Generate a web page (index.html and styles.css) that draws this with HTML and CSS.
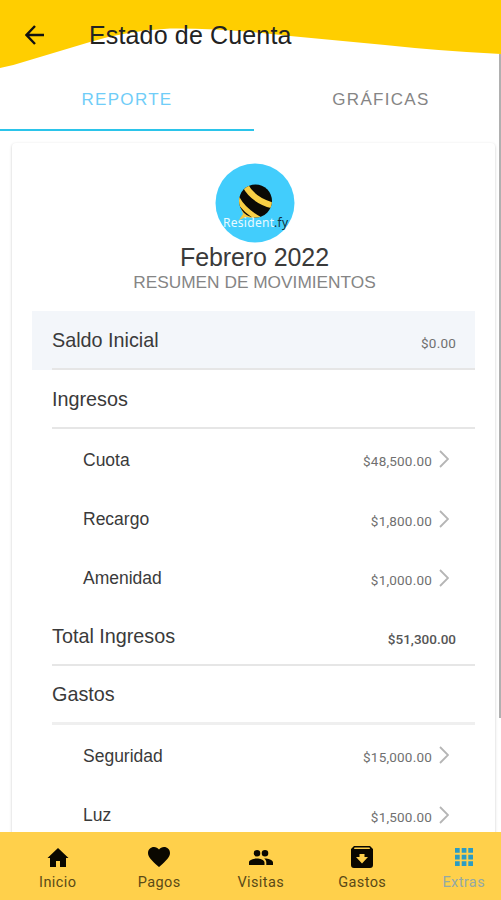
FILE: index.html
```
<!DOCTYPE html>
<html lang="es">
  <head>
    <meta charset="UTF-8" />
    <meta name="viewport" content="width=device-width, initial-scale=1.0" />
    <title>Estado de Cuenta</title>
    <link rel="stylesheet" href="styles.css">
  </head>
  <body>
    <div class="app">
      <svg class="wave" viewBox="0 0 501 70">
        <path fill="#ffce00" d="M0 0H501V54Q440 51 385 45L290 36Q225 28 170 28.500Q125 31 90 42L30 60Q15 65 0 68Z" />
      </svg>
      <header class="header">
        <svg class="back" viewBox="0 0 20 20">
          <path d="M19 10H2M10 1L1.500 10L10 19" />
        </svg>
        <h1>Estado de Cuenta</h1>
      </header>
      <div class="tabs">
        <div class="tab active">REPORTE</div>
        <div class="tab">GRÁFICAS</div>
      </div>
      <main class="content">
        <div class="card">
          <div class="card-header">
            <svg class="logo" viewBox="0 0 80 80">
              <defs>
                <clipPath id="bee"><circle cx="40.500" cy="38" r="16.500" /></clipPath>
              </defs>
              <circle cx="40" cy="40" r="39.500" fill="#42cdfc" />
              <path d="M26 45L28 51L24 57L31 54L38 55L42 52L34 45Z" fill="#f6c93f" />
              <g clip-path="url(#bee)">
                <rect x="22" y="20" width="38" height="38" fill="#0b0905" />
                <path d="M30 22Q38 38 60 43" fill="none" stroke="#f9cf45" stroke-width="6" />
                <path d="M22 35Q29 48 46 57" fill="none" stroke="#f9cf45" stroke-width="5" />
              </g>
              <text x="8" y="64" class="logo-text" textLength="51">Resident</text>
              <text x="59" y="64" class="logo-text dark" textLength="14">.fy</text>
            </svg>
            <h2>Febrero 2022</h2>
            <p>RESUMEN DE MOVIMIENTOS</p>
          </div>
          <div class="list">
            <div class="row shaded"><div class="inner"><span>Saldo Inicial</span><b>$0.00</b></div></div>
            <div class="row"><div class="inner"><span>Ingresos</span></div></div>
            <div class="row item"><span>Cuota</span><b>$48,500.00</b><svg class="arrow" viewBox="0 0 10 18"><path d="M1 1L9 9L1 17" /></svg></div>
            <div class="row item"><span>Recargo</span><b>$1,800.00</b><svg class="arrow" viewBox="0 0 10 18"><path d="M1 1L9 9L1 17" /></svg></div>
            <div class="row item"><span>Amenidad</span><b>$1,000.00</b><svg class="arrow" viewBox="0 0 10 18"><path d="M1 1L9 9L1 17" /></svg></div>
            <div class="row"><div class="inner"><span>Total Ingresos</span><b class="total">$51,300.00</b></div></div>
            <div class="row"><div class="inner thick"><span>Gastos</span></div></div>
            <div class="row item"><span>Seguridad</span><b>$15,000.00</b><svg class="arrow" viewBox="0 0 10 18"><path d="M1 1L9 9L1 17" /></svg></div>
            <div class="row item"><span>Luz</span><b>$1,500.00</b><svg class="arrow" viewBox="0 0 10 18"><path d="M1 1L9 9L1 17" /></svg></div>
          </div>
        </div>
      </main>
      <div class="scrollbar"></div>
      <nav class="tab-bar">
        <div class="nav-item">
          <svg viewBox="0 0 24 24"><path d="M10 22v-6h4v6h6v-9h2.500L12 3 1.500 13H4v9z" /></svg>
          <span>Inicio</span>
        </div>
        <div class="nav-item">
          <svg viewBox="0 0 24 24"><path d="M12 22l-1.500-1.300C5 15.700 1 12.300 1 8 1 4.500 3.700 2 7 2c2 0 3.800.9 5 2.400C13.200 2.900 15 2 17 2c3.300 0 6 2.500 6 6 0 4.300-4 7.700-9.500 12.700z" /></svg>
          <span>Pagos</span>
        </div>
        <div class="nav-item">
          <svg viewBox="0 0 24 24"><path d="M16 11.500a3.300 3.300 0 1 0 0-6.600 3.300 3.300 0 0 0 0 6.600zm-8 0a3.300 3.300 0 1 0 0-6.600 3.300 3.300 0 0 0 0 6.600zm0 2c-2.700 0-8 1.300-8 4V20h15.500v-2.500c0-2.700-4.800-4-7.500-4zm8 0h-.9c1.400.9 2.200 2.200 2.200 4V20H24v-2.500c0-2.700-5.300-4-8-4z" /></svg>
          <span>Visitas</span>
        </div>
        <div class="nav-item">
          <svg viewBox="0 0 24 24"><path fill-rule="evenodd" d="M4 1h16l3 3v16a3 3 0 0 1-3 3H4a3 3 0 0 1-3-3V4zM4.500 2.500L4 4h16l-.5-1.500zM9.500 9v3H6l6 6.500 6-6.500h-3.500V9z" /></svg>
          <span>Gastos</span>
        </div>
        <div class="nav-item selected">
          <svg viewBox="0 0 24 24"><path d="M3 3h4.700v4.700H3zm6.700 0h4.700v4.700H9.700zm6.600 0H21v4.700h-4.700zM3 9.700h4.700v4.700H3zm6.700 0h4.700v4.700H9.700zm6.600 0H21v4.700h-4.700zM3 16.300h4.700V21H3zm6.700 0h4.700V21H9.700zm6.600 0H21V21h-4.700z" /></svg>
          <span>Extras</span>
        </div>
      </nav>
    </div>
  </body>
</html>
```
FILE: styles.css
```
* {
  box-sizing: border-box;
}
body {
  margin: 0;
  font-family: "Liberation Sans", Arial, sans-serif;
  color: #3a3a3a;
}
h1, h2, p {
  margin: 0;
  font-weight: 400;
}
.app {
  position: relative;
  display: flex;
  flex-direction: column;
  height: 900px;
  overflow: hidden;
  background-color: #fff;
}
.wave {
  position: absolute;
  top: 0;
  left: 0;
  width: 501px;
  height: 70px;
}
.header {
  position: relative;
  display: flex;
  align-items: center;
  height: 70px;
  flex-shrink: 0;
  padding-left: 25px;
}
.back {
  width: 20px;
  height: 20px;
  margin-right: 44px;
  fill: none;
  stroke: #111;
  stroke-width: 2.4;
}
.header h1 {
  font-size: 25px;
  letter-spacing: 0.15px;
  color: #222;
}
.tabs {
  display: flex;
  height: 61px;
  flex-shrink: 0;
}
.tab {
  width: 254px;
  flex-shrink: 0;
  display: flex;
  align-items: center;
  justify-content: center;
  border-bottom: 2px solid transparent;
  font-size: 17px;
  letter-spacing: 1.3px;
  color: #858585;
}
.tab.active {
  color: #70cdf8;
  border-color: #2bc4ea;
}
.content {
  flex: 1;
  min-height: 0;
  overflow: hidden;
  padding: 12px 6px 0 12px;
}
.card {
  height: 800px;
  padding: 20px 20px 0;
  border-radius: 4px;
  box-shadow: 0 1px 3px rgba(0, 0, 0, 0.22);
}
.card-header {
  display: flex;
  flex-direction: column;
  align-items: center;
  height: 148px;
}
.logo {
  width: 80px;
  height: 80px;
  margin-left: 2px;
  flex-shrink: 0;
}
.logo-text {
  font-family: "Noto Sans", sans-serif;
  font-size: 12px;
  fill: #e8faff;
}
.logo-text.dark {
  fill: #12303a;
}
.card-header h2 {
  font-size: 25px;
  line-height: 28px;
  letter-spacing: -0.1px;
  padding-left: 2px;
}
.card-header p {
  font-size: 17.300px;
  line-height: 22px;
  padding-left: 2px;
  color: #858585;
}
.row {
  display: flex;
  height: 59.200px;
  padding-left: 20px;
  padding-top: 1px;
  font-size: 19.800px;
}
.shaded {
  background-color: #f3f6fa;
}
.inner {
  flex: 1;
  display: flex;
  align-items: center;
  justify-content: space-between;
  padding-right: 19px;
  border-bottom: 2px solid #e6e6e6;
}
.inner.thick {
  border-bottom: 3px solid #efefef;
}
.row b {
  padding-top: 6px;
  font-family: Roboto, sans-serif;
  font-size: 13.500px;
  font-weight: 400;
  letter-spacing: 0.2px;
  color: #707070;
}
.row b.total {
  font-weight: 500;
  letter-spacing: 0;
  color: #555;
}
.item {
  align-items: center;
  padding-left: 51px;
  padding-right: 26px;
  padding-top: 3px;
  font-size: 17.500px;
}
.item span {
  flex: 1;
}
.item b {
  padding-top: 2px;
}
.arrow {
  width: 10px;
  height: 18px;
  margin: 0 0 2px 7px;
  fill: none;
  stroke: #b5b5b5;
  stroke-width: 1.8;
}
.scrollbar {
  position: absolute;
  top: 54px;
  right: 0;
  width: 2px;
  height: 664px;
  background-color: #b0b0b0;
}
.tab-bar {
  display: flex;
  height: 68px;
  flex-shrink: 0;
  padding: 13px 0 0 7px;
  background-color: #ffd04b;
}
.nav-item {
  width: 101.500px;
  flex-shrink: 0;
  display: flex;
  flex-direction: column;
  align-items: center;
  font-family: Roboto, sans-serif;
  font-size: 14.500px;
  letter-spacing: 0.4px;
  color: #5a4a17;
}
.nav-item svg {
  width: 24px;
  height: 24px;
  margin-bottom: 5px;
  fill: #0a0800;
}
.nav-item.selected {
  color: #94a9a5;
}
.nav-item.selected svg {
  fill: #2b9cc4;
}
```
